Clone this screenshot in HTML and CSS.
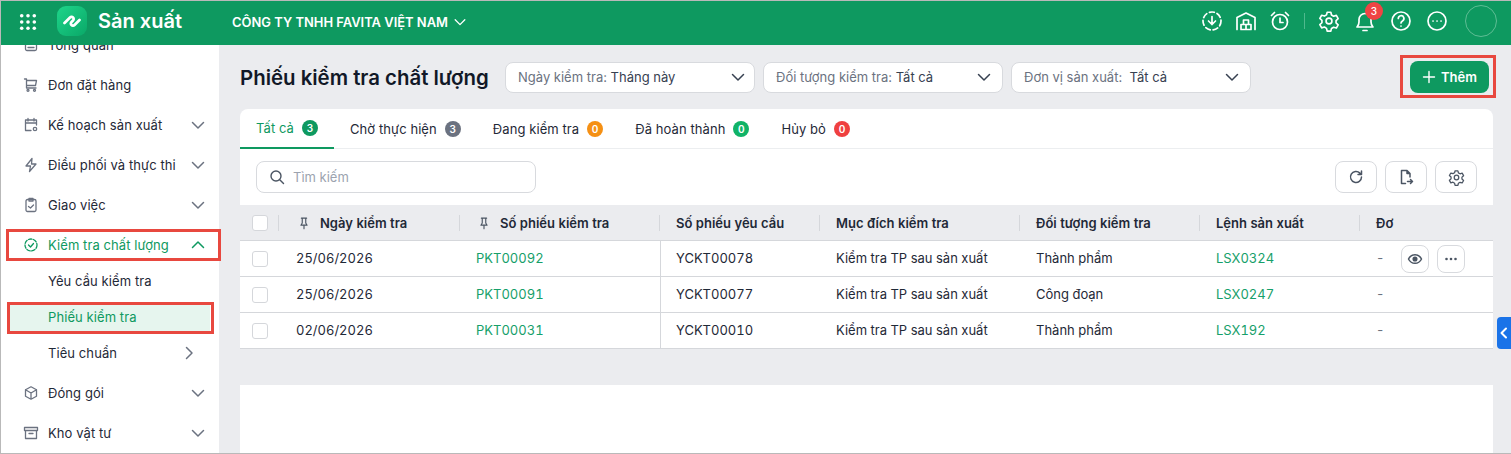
FILE: index.html
```html
<!DOCTYPE html>
<html lang="vi">
<head>
    <meta charset="UTF-8">
    <title>Phiếu kiểm tra chất lượng</title>
    <link rel="stylesheet" href="styles.css">
</head>
<body>
<svg class="defs" width="0" height="0">
    <symbol id="chev" viewBox="0 0 16 16"><path d="M2.500 5.500 8 11l5.500-5.500" fill="none" stroke="currentColor" stroke-width="1.500" stroke-linecap="round" stroke-linejoin="round"/></symbol>
    <symbol id="pin" viewBox="0 0 16 16"><path d="M5 2.500h6M6 2.500v5.500L4.500 10.500h7L10 8V2.500M8 10.500V14.500" fill="none" stroke="currentColor" stroke-width="1.300" stroke-linecap="round" stroke-linejoin="round"/></symbol>
    <symbol id="gear" viewBox="0 0 24 24"><g fill="none" stroke="currentColor" stroke-width="1.800" stroke-linejoin="round"><path d="M10 2.500h4l.7 3 2.300 1.300 3-.9 2 3.500-2.300 2.100v2.600l2.300 2.100-2 3.500-3-.9-2.300 1.300-.7 3h-4l-.7-3L7 18.600l-3 .9-2-3.500 2.300-2.100v-2.600L2 9.200l2-3.500 3 .9 2.300-1.300z"/><circle cx="12" cy="12" r="3.200"/></g></symbol>
</svg>

<div class="app">
    <header class="topbar">
        <svg class="apps" width="18" height="18" viewBox="0 0 20 20" fill="#fff">
            <circle cx="3" cy="3" r="2"/><circle cx="10" cy="3" r="2"/><circle cx="17" cy="3" r="2"/>
            <circle cx="3" cy="10" r="2"/><circle cx="10" cy="10" r="2"/><circle cx="17" cy="10" r="2"/>
            <circle cx="3" cy="17" r="2"/><circle cx="10" cy="17" r="2"/><circle cx="17" cy="17" r="2"/>
        </svg>
        <div class="logo">
            <svg width="18" height="18" viewBox="0 0 18 18" fill="none" stroke="#fff" stroke-width="2.700" stroke-linecap="round" stroke-linejoin="round">
                <path d="M1.500 11 7 5.500c2-2 5 1 3 3L8.500 10c-2 2 1 5 3 3l5-5"/>
            </svg>
        </div>
        <span class="app-name">Sản xuất</span>
        <span class="company">CÔNG TY TNHH FAVITA VIỆT NAM</span>
        <svg class="company-chev" width="14" height="14"><use href="#chev"/></svg>

        <div class="top-icons">
            <div class="top-group">
                <svg width="22" height="22" viewBox="0 0 22 22" fill="none" stroke="#fff" stroke-width="1.700" stroke-linecap="round" stroke-linejoin="round">
                    <circle cx="11" cy="11" r="9" stroke-dasharray="5 2.900"/>
                    <path d="M11 6.500v8M7.500 11l3.500 3.500 3.500-3.500"/>
                </svg>
                <svg width="22" height="22" viewBox="0 0 22 22" fill="none" stroke="#fff" stroke-width="1.700" stroke-linecap="round" stroke-linejoin="round">
                    <path d="M2 19.500V7.500L11 3l9 4.500v12"/>
                    <path d="M6 19.500v-5h5v5zM11 19.500v-5h5v5zM8.500 14.500V10h5v4.500"/>
                </svg>
                <svg width="22" height="22" viewBox="0 0 22 22" fill="none" stroke="#fff" stroke-width="1.700" stroke-linecap="round" stroke-linejoin="round">
                    <circle cx="11" cy="12" r="7.500"/>
                    <path d="M11 8v4.500h3M2.500 5.500 5.500 2.500M19.500 5.500l-3-3"/>
                </svg>
            </div>
            <span class="top-sep"></span>
            <div class="top-group wide">
                <svg class="white-ic" width="22" height="22"><use href="#gear"/></svg>
                <div class="bell">
                    <svg width="22" height="22" viewBox="0 0 22 22" fill="none" stroke="#fff" stroke-width="1.700" stroke-linecap="round" stroke-linejoin="round">
                        <path d="M3 17c1.500-1.500 2-3 2-5V9.500a6 6 0 0 1 12 0V12c0 2 .5 3.500 2 5z"/>
                        <path d="M9 20.500h4"/>
                    </svg>
                    <span class="bell-count">3</span>
                </div>
                <svg width="22" height="22" viewBox="0 0 22 22" fill="none" stroke="#fff" stroke-width="1.700" stroke-linecap="round" stroke-linejoin="round">
                    <circle cx="11" cy="11" r="9"/>
                    <path d="M8.300 8.500a2.800 2.800 0 1 1 4.200 2.400c-1 .6-1.500 1.100-1.500 2.100M11 16v.1"/>
                </svg>
                <svg width="22" height="22" viewBox="0 0 22 22" fill="none" stroke="#fff" stroke-width="1.700" stroke-linecap="round">
                    <circle cx="11" cy="11" r="9"/>
                    <path d="M7 11h.1M11 11h.1M15 11h.1"/>
                </svg>
            </div>
            <span class="avatar"></span>
        </div>
    </header>

    <div class="body">
        <nav class="sidebar">
            <div class="nav-list">
                <a class="nav-item">
                    <svg class="nav-ic" viewBox="0 0 16 16"><rect x="2.500" y="2.500" width="11" height="11" rx="1.500"/><path d="M5 10.500h6"/></svg>
                    <span>Tổng quan</span>
                </a>
                <a class="nav-item">
                    <svg class="nav-ic" viewBox="0 0 16 16"><path d="M1.500 2h2v9h9.500M3.500 3.500h10l-1 5h-9"/><circle cx="5" cy="13.300" r="1"/><circle cx="11.500" cy="13.300" r="1"/></svg>
                    <span>Đơn đặt hàng</span>
                </a>
                <a class="nav-item">
                    <svg class="nav-ic" viewBox="0 0 16 16"><path d="M8 13.500H2.500v-10.500h11V8M2.500 6h11M5 1.500V4M11 1.500V4"/><circle cx="12" cy="12" r="1.700"/></svg>
                    <span>Kế hoạch sản xuất</span>
                    <svg class="nav-chev"><use href="#chev"/></svg>
                </a>
                <a class="nav-item">
                    <svg class="nav-ic" viewBox="0 0 16 16"><path d="M9 1.500 3 9h4.500L6.500 14.500 13 7H8.500z"/></svg>
                    <span>Điều phối và thực thi</span>
                    <svg class="nav-chev"><use href="#chev"/></svg>
                </a>
                <a class="nav-item">
                    <svg class="nav-ic" viewBox="0 0 16 16"><rect x="3" y="2.500" width="10" height="12" rx="1.500"/><path d="M6 1.500h4v2.500H6zM5.500 9.500l2 1.500 3-3"/></svg>
                    <span>Giao việc</span>
                    <svg class="nav-chev"><use href="#chev"/></svg>
                </a>
                <a class="nav-item is-open">
                    <svg class="nav-ic" viewBox="0 0 16 16"><circle cx="8" cy="8" r="6" stroke-dasharray="3.500 1.500"/><path d="M5.500 8 7.500 10l3-3.500"/></svg>
                    <span>Kiểm tra chất lượng</span>
                    <svg class="nav-chev flip"><use href="#chev"/></svg>
                </a>
                <div class="sub-list">
                    <a class="sub-item">Yêu cầu kiểm tra</a>
                    <a class="sub-item is-active">Phiếu kiểm tra</a>
                    <a class="sub-item">
                        <span>Tiêu chuẩn</span>
                        <svg class="sub-chev"><use href="#chev"/></svg>
                    </a>
                </div>
                <a class="nav-item">
                    <svg class="nav-ic" viewBox="0 0 16 16"><path d="M8 1.800 13.500 4.800v6.400L8 14.200l-5.500-3V4.800zM2.500 4.800 8 8l5.500-3.200M8 8v6.200"/></svg>
                    <span>Đóng gói</span>
                    <svg class="nav-chev"><use href="#chev"/></svg>
                </a>
                <a class="nav-item">
                    <svg class="nav-ic" viewBox="0 0 16 16"><path d="M1.500 2.500h13v3h-13zM2.500 5.500v8h11v-8M6 8.500h4"/></svg>
                    <span>Kho vật tư</span>
                    <svg class="nav-chev"><use href="#chev"/></svg>
                </a>
            </div>
        </nav>

        <main class="main">
            <div class="page-head">
                <h1>Phiếu kiểm tra chất lượng</h1>
                <div class="filter f-date"><span><i>Ngày kiểm tra:</i> Tháng này</span><svg width="16" height="16"><use href="#chev"/></svg></div>
                <div class="filter f-obj"><span><i>Đối tượng kiểm tra:</i> Tất cả</span><svg width="16" height="16"><use href="#chev"/></svg></div>
                <div class="filter f-unit"><span><i>Đơn vị sản xuất:</i>&nbsp; Tất cả</span><svg width="16" height="16"><use href="#chev"/></svg></div>
                <button class="btn-add">
                    <svg width="14" height="14" viewBox="0 0 14 14" fill="none" stroke="#fff" stroke-width="1.400" stroke-linecap="round"><path d="M7 1.500v11M1.500 7h11"/></svg>
                    Thêm
                </button>
            </div>

            <section class="card">
                <div class="tabs">
                    <div class="tab active">Tất cả <b class="count green-dark">3</b></div>
                    <div class="tab">Chờ thực hiện <b class="count gray">3</b></div>
                    <div class="tab">Đang kiểm tra <b class="count orange">0</b></div>
                    <div class="tab">Đã hoàn thành <b class="count green">0</b></div>
                    <div class="tab">Hủy bỏ <b class="count red">0</b></div>
                </div>

                <div class="toolbar">
                    <div class="search">
                        <svg width="16" height="16" viewBox="0 0 16 16" fill="none" stroke="#4b5563" stroke-width="1.400" stroke-linecap="round"><circle cx="7" cy="7" r="5"/><path d="m11 11 3.500 3.500"/></svg>
                        <span>Tìm kiếm</span>
                    </div>
                    <div class="tool-btns">
                        <button class="tool-btn">
                            <svg width="16" height="16" viewBox="0 0 16 16" fill="none" stroke="#4b5563" stroke-width="1.500" stroke-linecap="round" stroke-linejoin="round"><path d="M13.500 8a5.500 5.500 0 1 1-1.600-3.900L13.500 5.500M13.500 2v3.500H10"/></svg>
                        </button>
                        <button class="tool-btn">
                            <svg width="16" height="16" viewBox="0 0 16 16" fill="none" stroke="#4b5563" stroke-width="1.500" stroke-linecap="round" stroke-linejoin="round"><path d="M7.500 14.500H3.500v-13H9L12 4.500V8M9 1.500v3h3M9.500 12.500h5M12.500 10.500l2 2-2 2"/></svg>
                        </button>
                        <button class="tool-btn"><svg class="dark-ic" width="17" height="17"><use href="#gear"/></svg></button>
                    </div>
                </div>

                <div class="grid-row grid-head">
                    <div class="cell cell-check"><span class="check check-head"></span></div>
                    <div class="cell"><svg class="pin" width="14" height="14"><use href="#pin"/></svg>Ngày kiểm tra</div>
                    <div class="cell"><svg class="pin" width="14" height="14"><use href="#pin"/></svg>Số phiếu kiểm tra</div>
                    <div class="cell">Số phiếu yêu cầu</div>
                    <div class="cell">Mục đích kiểm tra</div>
                    <div class="cell">Đối tượng kiểm tra</div>
                    <div class="cell">Lệnh sản xuất</div>
                    <div class="cell">Đơ</div>
                </div>

                <div class="grid-row">
                    <div class="cell cell-check"><span class="check"></span></div>
                    <div class="cell">25/06/2026</div>
                    <div class="cell link">PKT00092</div>
                    <div class="cell frozen-end">YCKT00078</div>
                    <div class="cell">Kiểm tra TP sau sản xuất</div>
                    <div class="cell">Thành phẩm</div>
                    <div class="cell link">LSX0324</div>
                    <div class="cell muted">-</div>
                    <div class="row-actions">
                        <button class="row-btn">
                            <svg width="16" height="16" viewBox="0 0 16 16" fill="none" stroke="#4b5563" stroke-width="1.500"><path d="M1.500 8C3 5 5.300 3.700 8 3.700S13 5 14.500 8C13 11 10.700 12.300 8 12.300S3 11 1.500 8z"/><circle cx="8" cy="8" r="1.800" fill="#4b5563"/></svg>
                        </button>
                        <button class="row-btn">
                            <svg width="16" height="16" viewBox="0 0 16 16" fill="#4b5563"><circle cx="3.500" cy="8" r="1.300"/><circle cx="8" cy="8" r="1.300"/><circle cx="12.500" cy="8" r="1.300"/></svg>
                        </button>
                    </div>
                </div>
                <div class="grid-row">
                    <div class="cell cell-check"><span class="check"></span></div>
                    <div class="cell">25/06/2026</div>
                    <div class="cell link">PKT00091</div>
                    <div class="cell frozen-end">YCKT00077</div>
                    <div class="cell">Kiểm tra TP sau sản xuất</div>
                    <div class="cell">Công đoạn</div>
                    <div class="cell link">LSX0247</div>
                    <div class="cell muted">-</div>
                </div>
                <div class="grid-row">
                    <div class="cell cell-check"><span class="check"></span></div>
                    <div class="cell">02/06/2026</div>
                    <div class="cell link">PKT00031</div>
                    <div class="cell frozen-end">YCKT00010</div>
                    <div class="cell">Kiểm tra TP sau sản xuất</div>
                    <div class="cell">Thành phẩm</div>
                    <div class="cell link">LSX192</div>
                    <div class="cell muted">-</div>
                </div>
            </section>

            <section class="card-empty"></section>
        </main>
    </div>

    <div class="side-toggle">
        <svg width="10" height="12" viewBox="0 0 10 12" fill="none" stroke="#fff" stroke-width="2" stroke-linecap="round" stroke-linejoin="round"><path d="M7 1.500 2.500 6 7 10.500"/></svg>
    </div>

    <!-- red boxes drawn on top of the screenshot -->
    <span class="mark mark-nav"></span>
    <span class="mark mark-sub"></span>
    <span class="mark mark-add"></span>
</div>
</body>
</html>
```

FILE: styles.css
```css
* {
    box-sizing: border-box;
    margin: 0;
    padding: 0;
    font-family: Inter, 'Noto Sans', sans-serif;
}

html, body {
    height: 100%;
    overflow: hidden;
}

.defs {
    display: none;
}

.app {
    position: relative;
    width: 1511px;
    height: 454px;
    display: flex;
    flex-direction: column;
    border-top: 1px solid #b9b9b9;
    border-left: 1px solid #b9b9b9;
    border-bottom: 1px solid #b9b9b9;
    background-color: #ebecef;
    color: #1f2937;
    font-size: 13px;
    overflow: hidden;
}

/* top bar */
.topbar {
    flex: none;
    height: 44px;
    display: flex;
    align-items: center;
    padding: 0 0 4px 18px;
    background-color: #0e9960;
    color: #fff;
}

.apps {
    flex: none;
    margin-top: 2px;
}

.logo {
    width: 30px;
    height: 30px;
    margin-left: 20px;
    display: flex;
    align-items: center;
    justify-content: center;
    border-radius: 9px;
    background: linear-gradient(135deg, #1ed58a, #0aa868);
}

.app-name {
    margin-left: 11px;
    font-size: 20px;
    font-weight: 600;
}

.company {
    margin: 2px 0 0 50px;
    font-size: 12.950px;
    font-weight: 600;
}

.company-chev {
    margin: 2px 0 0 5px;
}

.top-icons {
    margin-left: auto;
    display: flex;
    align-items: center;
    gap: 13px;
    padding-right: 14px;
}

.top-group {
    display: flex;
    align-items: center;
    gap: 12px;
}

.top-group.wide {
    gap: 14px;
}

.white-ic {
    color: #fff;
}

.top-sep {
    width: 1px;
    height: 16px;
    background-color: #4fb98d;
}

.bell {
    position: relative;
    height: 22px;
}

.bell-count {
    position: absolute;
    top: -8px;
    right: -7px;
    width: 18px;
    height: 18px;
    border-radius: 50%;
    background-color: #ef4444;
    color: #fff;
    font-size: 10px;
    font-weight: 500;
    line-height: 18px;
    text-align: center;
}

.avatar {
    width: 32px;
    height: 32px;
    margin-left: 4px;
    border: 1px solid #5ebd94;
    border-radius: 50%;
}

/* sidebar */
.body {
    flex: 1;
    display: flex;
    min-height: 0;
}

.sidebar {
    flex: none;
    width: 218px;
    background-color: #fff;
    overflow: hidden;
    letter-spacing: 0.08px;
}

.nav-list {
    margin-top: -20px;
}

.nav-item {
    height: 40px;
    display: flex;
    align-items: center;
    padding: 0 13px 0 22px;
    color: #1f2937;
}

.nav-item span {
    flex: 1;
    margin-left: 9px;
}

.nav-ic {
    width: 16px;
    height: 16px;
    fill: none;
    stroke: #6b7280;
    stroke-width: 1.300;
    stroke-linecap: round;
    stroke-linejoin: round;
}

.nav-chev {
    width: 16px;
    height: 16px;
    color: #6b7280;
}

.flip {
    transform: rotate(180deg);
}

.is-open {
    color: #0e9960;
}

.is-open .nav-ic {
    stroke: #0e9960;
}

.is-open .nav-chev {
    color: #0e9960;
}

.sub-list {
    display: flex;
    flex-direction: column;
    gap: 8px;
    margin: 2px 0 6px;
}

.sub-item {
    height: 28px;
    display: flex;
    align-items: center;
    justify-content: space-between;
    margin: 0 9px 0 8px;
    padding: 0 13px 0 39px;
    color: #1f2937;
}

.sub-item.is-active {
    background-color: #e6f5ee;
    color: #0e9960;
}

.sub-chev {
    width: 16px;
    height: 16px;
    color: #6b7280;
    transform: rotate(-90deg);
}

/* main */
.main {
    flex: 1;
    min-width: 0;
    padding: 0 18px 0 21px;
}

.page-head {
    height: 64px;
    display: flex;
    align-items: center;
}

h1 {
    width: 265px;
    flex: none;
    font-size: 20.400px;
    font-weight: 600;
    color: #111827;
}

.filter {
    height: 31px;
    display: flex;
    align-items: center;
    justify-content: space-between;
    margin-right: 8px;
    padding: 0 10px 0 12px;
    border: 1px solid #d8dade;
    border-radius: 8px;
    background-color: #fff;
    color: #374151;
}

.filter i {
    font-style: normal;
    color: #6b7280;
}

.f-date {
    width: 250px;
    padding-right: 8px;
}

.f-obj, .f-unit {
    width: 240px;
}

.btn-add {
    width: 79px;
    height: 32px;
    margin-left: auto;
    margin-right: 4px;
    display: flex;
    align-items: center;
    justify-content: center;
    gap: 5px;
    border: none;
    border-radius: 8px;
    background-color: #0e9960;
    color: #fff;
    font-size: 13px;
    font-weight: 600;
}

.card {
    border-radius: 8px 8px 0 0;
    background-color: #fff;
    position: relative;
}

.tabs {
    height: 40px;
    display: flex;
    border-bottom: 1px solid #eceef0;
    letter-spacing: 0.08px;
}

.tab {
    height: 40px;
    display: flex;
    align-items: center;
    gap: 8px;
    padding: 0 16px;
}

.tab.active {
    border-bottom: 2px solid #0e9960;
    color: #0e9960;
}

.count {
    width: 16px;
    height: 16px;
    border-radius: 50%;
    color: #fff;
    font-size: 10px;
    font-weight: 600;
    line-height: 16px;
    text-align: center;
}

.green-dark {
    background-color: #0e9960;
}

.gray {
    background-color: #6b7280;
}

.orange {
    background-color: #f59014;
}

.green {
    background-color: #10b367;
}

.red {
    background-color: #ef4040;
}

.toolbar {
    height: 56px;
    display: flex;
    align-items: center;
    justify-content: space-between;
    padding: 0 16px;
}

.search {
    width: 280px;
    height: 32px;
    display: flex;
    align-items: center;
    gap: 8px;
    padding: 0 12px;
    border: 1px solid #d8dade;
    border-radius: 8px;
    color: #9ca3af;
}

.tool-btns {
    display: flex;
    gap: 8px;
}

.tool-btn {
    width: 42px;
    height: 32px;
    display: flex;
    align-items: center;
    justify-content: center;
    border: 1px solid #d8dade;
    border-radius: 8px;
    background-color: #fff;
}

.dark-ic {
    color: #4b5563;
}

/* grid */
.grid-row {
    position: relative;
    height: 36px;
    display: grid;
    grid-template-columns: 39px 181px 200px 160px 200px 180px 160px 133px;
    border-bottom: 1px solid #d5d7db;
    background-color: #fff;
    font-variant-numeric: tabular-nums;
}

.cell {
    display: flex;
    align-items: center;
    padding: 0 0 2px 16px;
    white-space: nowrap;
    overflow: hidden;
}

.cell:nth-child(2) {
    padding-left: 17px;
}

.cell-check {
    padding: 0 0 0 12px;
}

.grid-head {
    background-color: #ebecef;
    font-weight: 600;
}

.grid-head .cell {
    position: relative;
    padding-bottom: 0;
}

.grid-head .cell::after {
    content: "";
    position: absolute;
    right: 0;
    top: 10px;
    width: 1px;
    height: 16px;
    background-color: #d5d7db;
}

.grid-head .cell:last-child::after {
    display: none;
}

.pin {
    margin: 0 9px 0 1px;
    color: #4b5563;
    flex: none;
}

.check {
    width: 16px;
    height: 16px;
    border: 1px solid #d5d7db;
    border-radius: 3px;
    background-color: #fff;
}

.link {
    color: #16a06a;
}

.frozen-end {
    border-left: 1px solid #d5d7db;
    padding-left: 15px;
}

.muted {
    color: #6b7280;
}

.row-actions {
    position: absolute;
    top: 4px;
    right: 28px;
    display: flex;
    gap: 8px;
}

.row-btn {
    width: 28px;
    height: 28px;
    display: flex;
    align-items: center;
    justify-content: center;
    border: 1px solid #d8dade;
    border-radius: 8px;
    background-color: #fff;
}

.card-empty {
    height: 120px;
    margin-top: 36px;
    background-color: #fff;
}

/* right edge toggle */
.side-toggle {
    position: absolute;
    top: 316px;
    left: 1496px;
    width: 14px;
    height: 32px;
    display: flex;
    align-items: center;
    justify-content: center;
    border-radius: 4px 0 0 4px;
    background-color: #1a73e8;
}

.mark {
    position: absolute;
    border: 3px solid #e8483f;
}

.mark-nav {
    left: 5px;
    top: 228px;
    width: 215px;
    height: 32px;
}

.mark-sub {
    left: 6px;
    top: 301px;
    width: 207px;
    height: 32px;
}

.mark-add {
    left: 1399px;
    top: 54px;
    width: 96px;
    height: 43px;
}
```
